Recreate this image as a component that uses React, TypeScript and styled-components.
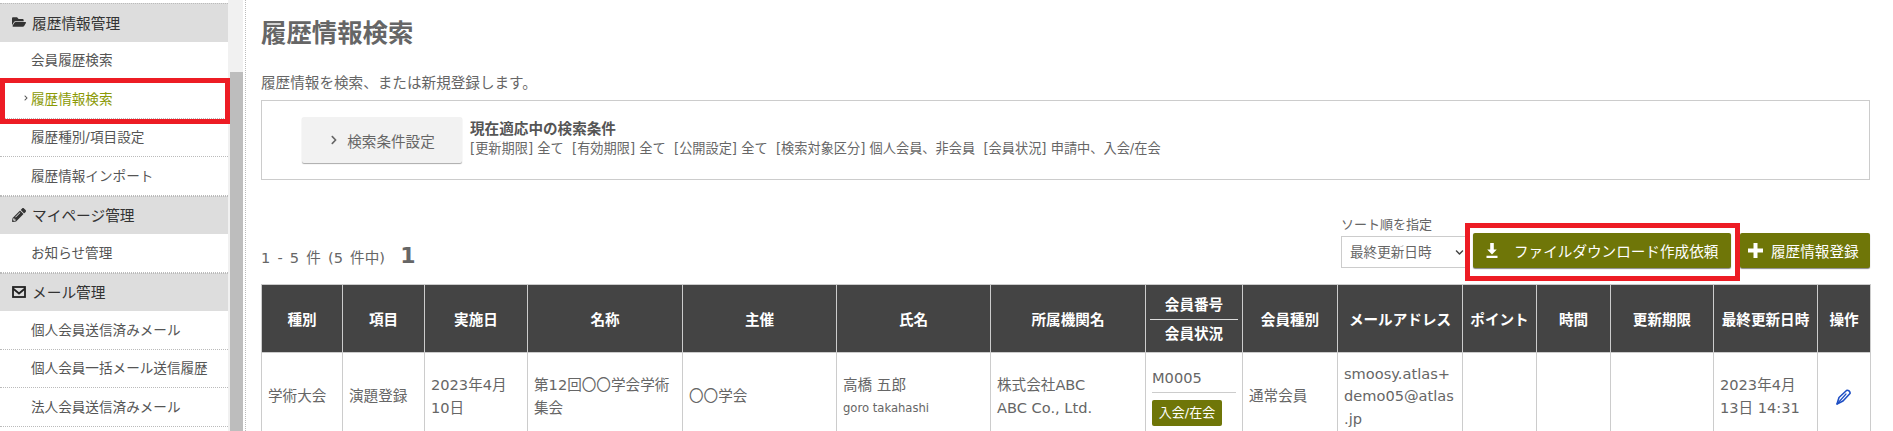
import React from 'react';
import styled, { createGlobalStyle } from 'styled-components';
import { FaFolderOpen, FaPencilAlt, FaChevronRight, FaChevronDown } from 'react-icons/fa';

const GlobalStyle = createGlobalStyle`
  * { margin: 0; padding: 0; box-sizing: border-box; }
  html, body { height: 431px; overflow: hidden; background: #fff; }
  body { font-family: 'DejaVu Sans', 'Noto Sans CJK JP', sans-serif; color: #666; }
`;

const Page = styled.div`
  display: flex; width: 1893px; height: 431px; overflow: hidden; position: relative;
`;

const Sidebar = styled.aside`
  width: 228px; flex: none; padding-top: 3px;
`;

const GroupHeader = styled.div`
  height: 38.5px; display: flex; align-items: center; gap: 6px; padding: 0 0 1px 12px;
  background: #ddd; border-top: 1px dotted #bbb; font-size: 14.7px; color: #333;
  svg { width: 14px; height: 14px; flex: none; }
`;

const NavItem = styled.div<{ $active?: boolean }>`
  height: 38.5px; display: flex; align-items: center; padding: 0 0 2px ${p => (p.$active ? '23px' : '31px')};
  border-bottom: 1px dotted #bbb; font-size: 13.6px;
  color: ${p => (p.$active ? '#8b9a06' : '#555')};
  svg { width: 6px; height: 6px; margin-right: 2px; color: #555; }
`;

const ScrollTrack = styled.div`
  width: 15px; flex: none; padding: 72px 0 0 2px; background: #f1f1f1;
`;

const ScrollThumb = styled.div`
  height: 100%; background: #bdbdbd;
`;

const Main = styled.main`
  flex: 1; min-width: 0; margin-left: 2px; border-left: 1px dotted #bbb; padding: 15px 23px 0 15px;
`;

const Title = styled.h1`
  font-size: 25.4px; line-height: 36px; font-weight: 700; color: #666;
`;

const Lead = styled.p`
  margin-top: 21px; font-size: 14.6px; line-height: 22px;
`;

const SearchBox = styled.section`
  margin-top: 6px; height: 80px; border: 1px solid #ccc; display: flex; align-items: center; gap: 8px; padding-left: 40px;
`;

const SettingButton = styled.button`
  width: 160px; height: 46px; display: flex; align-items: center; justify-content: center; gap: 8px;
  border: 0; background: #f2f2f2; box-shadow: 0 1px 1px #aaa; border-radius: 2px;
  font: inherit; font-size: 14.6px; color: #666;
  svg { width: 10px; height: 10px; }
`;

const Conditions = styled.div`
  display: flex; flex-direction: column; padding-bottom: 4px;
`;

const ConditionTitle = styled.strong`
  font-size: 14.6px; line-height: 21px; color: #555;
`;

const ConditionText = styled.span`
  font-size: 13.2px; line-height: 19px; white-space: pre;
`;

const ListBar = styled.div`
  margin-top: 41px; height: 63px; display: flex; align-items: flex-end; justify-content: space-between; padding-bottom: 15px;
`;

const Count = styled.div`
  font-size: 14.6px; line-height: 24px; word-spacing: 2.5px; margin-bottom: -1px;
  b { font-size: 22px; margin-left: 5px; }
`;

const Actions = styled.div`
  display: flex; align-items: flex-end; gap: 6px; margin-bottom: 1px;
`;

const SortField = styled.label`
  display: flex; flex-direction: column; gap: 3px; font-size: 13px; line-height: 17px;
`;

const SortSelect = styled.div`
  width: 126px; height: 32px; display: flex; align-items: center; justify-content: space-between;
  padding: 0 2px 0 8px; border: 1px solid #ccc; font-size: 13.6px;
  svg { width: 9px; height: 9px; color: #444; }
`;

const OliveButton = styled.button`
  height: 35px; display: flex; align-items: center; border: 0; border-radius: 2px;
  background: #6f7608; box-shadow: 0 1px 1px #888; color: #fff; font: inherit; font-size: 14.6px; white-space: nowrap;
`;

const DownloadButton = styled(OliveButton)`
  width: 258px; padding-left: 12px; gap: 15px;
  svg { width: 14px; height: 15px; }
`;

const RegisterButton = styled(OliveButton)`
  width: 130px; margin-left: 3px; padding-left: 8px; gap: 8px;
  svg { width: 15px; height: 15px; }
`;

const Table = styled.table`
  width: 1609px; table-layout: fixed; border-collapse: collapse; font-size: 14.6px;
`;

const Th = styled.th`
  height: 68px; background: #444; color: #fff; border: 1px solid #ccc; font-size: 14.6px; font-weight: 700; padding: 0 4px;
`;

const Td = styled.td`
  height: 88px; border: 1px solid #ccc; padding: 0 6px; line-height: 22.5px; vertical-align: middle;
  small { display: block; font-size: 11.6px; }
`;

const HeadLine = styled.div`
  height: 28px; line-height: 28px;
  & + & { border-top: 1px solid #ddd; }
`;

const MemberNo = styled.div`
  padding-bottom: 3px; border-bottom: 1px solid #ccc; line-height: 22px;
`;

const Badge = styled.span`
  display: block; width: 70px; height: 26px; margin-top: 7px; background: #6f7608; color: #fff; border-radius: 2px;
  font-size: 13px; line-height: 26px; text-align: center;
`;

const EditLink = styled.a`
  display: flex; justify-content: center; color: #1f4fc4;
  svg { width: 16px; height: 16px; }
`;

const Callout = styled.div<{ $left: number; $top: number; $width: number; $height: number }>`
  position: absolute; left: ${p => p.$left}px; top: ${p => p.$top}px; width: ${p => p.$width}px; height: ${p => p.$height}px;
  border: 5px solid #ed1c24; pointer-events: none;
`;

const DownloadIcon = () => (
  <svg viewBox="0 0 14 15" fill="currentColor">
    <path d="M5.200 0h3.600v6.500h3L7 11.500 2.200 6.500h3zM1.500 12.800h11V15h-11z" />
  </svg>
);

const PlusIcon = () => (
  <svg viewBox="0 0 15 15" fill="currentColor">
    <path d="M5.500 0h4v5.500H15v4H9.500V15h-4V9.500H0v-4h5.500z" />
  </svg>
);

const MailIcon = () => (
  <svg viewBox="0 0 14 14" fill="none" stroke="#222" strokeWidth="1.8">
    <rect x="1" y="2" width="12" height="10" />
    <path d="M1 3.500l6 5 6-5" />
  </svg>
);

const PenIcon = () => (
  <svg viewBox="0 0 16 16" fill="none" stroke="currentColor" strokeWidth="1.6" strokeLinecap="round" strokeLinejoin="round">
    <path d="M1 15l2-6.500L10.500 1.500c1.500-1 4 1 3.500 3L7 12z" fill="none" />
    <path d="M1 15l5-5.500L10 5" strokeWidth="1.2" />
  </svg>
);

const columns = [81, 82, 103, 155, 154, 154, 155, 97, 95, 125, 74, 74, 103, 104, 53];

const headings = ['種別', '項目', '実施日', '名称', '主催', '氏名', '所属機関名', null, '会員種別', 'メールアドレス', 'ポイント', '時間', '更新期限', '最終更新日時', '操作'];

export default function App() {
  return (
    <Page>
      <GlobalStyle />
      <Sidebar>
        <GroupHeader><FaFolderOpen />履歴情報管理</GroupHeader>
        <NavItem>会員履歴検索</NavItem>
        <NavItem $active><FaChevronRight />履歴情報検索</NavItem>
        <NavItem>履歴種別/項目設定</NavItem>
        <NavItem>履歴情報インポート</NavItem>
        <GroupHeader><FaPencilAlt />マイページ管理</GroupHeader>
        <NavItem>お知らせ管理</NavItem>
        <GroupHeader><MailIcon />メール管理</GroupHeader>
        <NavItem>個人会員送信済みメール</NavItem>
        <NavItem>個人会員一括メール送信履歴</NavItem>
        <NavItem>法人会員送信済みメール</NavItem>
      </Sidebar>
      <ScrollTrack><ScrollThumb /></ScrollTrack>
      <Main>
        <Title>履歴情報検索</Title>
        <Lead>履歴情報を検索、または新規登録します。</Lead>
        <SearchBox>
          <SettingButton><FaChevronRight />検索条件設定</SettingButton>
          <Conditions>
            <ConditionTitle>現在適応中の検索条件</ConditionTitle>
            <ConditionText>[更新期限] 全て  [有効期限] 全て  [公開設定] 全て  [検索対象区分] 個人会員、非会員  [会員状況] 申請中、入会/在会</ConditionText>
          </Conditions>
        </SearchBox>
        <ListBar>
          <Count>1 - 5 件 (5 件中)<b> 1</b></Count>
          <Actions>
            <SortField>
              ソート順を指定
              <SortSelect>最終更新日時<FaChevronDown /></SortSelect>
            </SortField>
            <DownloadButton><DownloadIcon />ファイルダウンロード作成依頼</DownloadButton>
            <RegisterButton><PlusIcon />履歴情報登録</RegisterButton>
          </Actions>
        </ListBar>
        <Table>
          <colgroup>
            {columns.map((w, i) => <col key={i} style={{ width: w }} />)}
          </colgroup>
          <thead>
            <tr>
              {headings.map((h, i) => (
                <Th key={i}>
                  {h ?? (<><HeadLine>会員番号</HeadLine><HeadLine>会員状況</HeadLine></>)}
                </Th>
              ))}
            </tr>
          </thead>
          <tbody>
            <tr>
              <Td>学術大会</Td>
              <Td>演題登録</Td>
              <Td>2023年4月<br />10日</Td>
              <Td>第12回〇〇学会学術<br />集会</Td>
              <Td>〇〇学会</Td>
              <Td>高橋 五郎<small>goro takahashi</small></Td>
              <Td>株式会社ABC<br />ABC Co., Ltd.</Td>
              <Td><MemberNo>M0005</MemberNo><Badge>入会/在会</Badge></Td>
              <Td>通常会員</Td>
              <Td>smoosy.atlas+<br />demo05@atlas<br />.jp</Td>
              <Td />
              <Td />
              <Td />
              <Td>2023年4月<br />13日 14:31</Td>
              <Td><EditLink><PenIcon /></EditLink></Td>
            </tr>
          </tbody>
        </Table>
      </Main>
      <Callout $left={0} $top={78} $width={230} $height={46} />
      <Callout $left={1465} $top={223} $width={275} $height={58} />
    </Page>
  );
}
